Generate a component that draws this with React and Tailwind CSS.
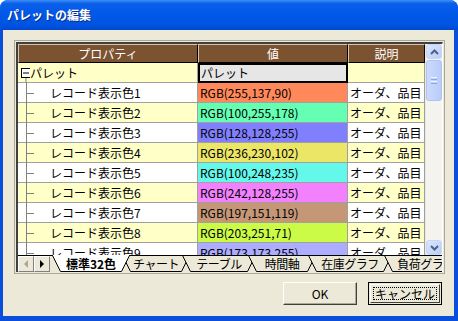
const rows = [
  [255, 137, 90],
  [100, 255, 178],
  [128, 128, 255],
  [236, 230, 102],
  [100, 248, 235],
  [242, 128, 255],
  [197, 151, 119],
  [203, 251, 71],
  [173, 173, 255],
];

const tabs = [
  { label: '標準32色', w: 'w-[78px]', width: 78, active: true },
  { label: 'チャート', w: 'w-[68px]', width: 68 },
  { label: 'テーブル', w: 'w-[74px]', width: 74 },
  { label: '時間軸', w: 'w-[68px]', width: 68 },
  { label: '在庫グラフ', w: 'w-[84px]', width: 84 },
  { label: '負荷グラフ', w: 'w-[84px]', width: 84 },
];

function Tree({ first }) {
  if (first) {
    return (
      <svg width="12" height="20" className="shrink-0">
        <rect x="3.5" y="5.5" width="9" height="9" fill="#fff" stroke="#000" />
        <line x1="5" y1="10" x2="11" y2="10" stroke="#000" />
        <line x1="8" y1="15" x2="8" y2="20" stroke="#808080" />
      </svg>
    );
  }
  return (
    <svg width="32" height="20" className="shrink-0">
      <line x1="8.5" y1="0" x2="8.5" y2="20" stroke="#808080" />
      <line x1="8" y1="10.5" x2="16" y2="10.5" stroke="#808080" />
    </svg>
  );
}

function ScrollBtn({ up }) {
  return (
    <div className="h-[15px] shrink-0 rounded-[3px] border border-[#c6d5f8] bg-[linear-gradient(to_bottom_right,#dbe6fe,#b9cdf8)] flex items-center justify-center">
      <svg width="9" height="6">
        <polyline
          points={up ? '1,5 4.5,1.5 8,5' : '1,1 4.5,4.5 8,1'}
          fill="none"
          stroke="#4d6185"
          strokeWidth="2"
        />
      </svg>
    </div>
  );
}

function Tab({ tab, first }) {
  const w = tab.width;
  return (
    <div
      className={`relative shrink-0 h-[17px] ${tab.w} ${first ? 'ml-[2px]' : '-ml-[8px]'} ${
        tab.active ? 'z-10 font-bold' : 'tracking-[-0.5px]'
      } flex items-center justify-center overflow-hidden`}
    >
      <svg className="absolute left-0 top-0" width={w} height="17">
        <polygon
          points={`0.5,0.5 ${w - 0.5},0.5 ${w - 8.5},16.5 8.5,16.5`}
          fill={tab.active ? '#ffffff' : '#ece9d8'}
          stroke="#000"
        />
        {tab.active && <line x1="1" y1="0.5" x2={w - 1} y2="0.5" stroke="#fff" />}
      </svg>
      <span className="relative">{tab.label}</span>
    </div>
  );
}

export default function App() {
  return (
    <div className="w-[458px] h-[321px] flex flex-col bg-[#0a4fdc] rounded-t-[8px] overflow-hidden font-['Noto_Sans_CJK_JP',sans-serif] text-[12px] text-black leading-none">
      <div className="h-[30px] shrink-0 flex items-center pl-[7px] pb-[1px] bg-[linear-gradient(to_bottom,#3d8ff5_0%,#0a5fea_12%,#0058e8_50%,#0053e0_85%,#0048cf_100%)] text-white font-bold [text-shadow:1px_1px_0_#0a2a88]">
        パレットの編集
      </div>

      <div className="flex-1 ml-[3px] mr-[4px] mb-[5px] bg-[#ece9d8] pl-[11px] pt-[10px] flex flex-col">
        <div className="w-[431px] h-[234px] border border-[#aca899] p-px">
          <div className="h-full border-l-2 border-t-2 border-r border-[#404040] border-r-white flex flex-col">
            <div className="h-[211px] shrink-0 flex">
              <div className="w-[407px] overflow-hidden flex flex-col">
                <div className="h-[19px] shrink-0 flex bg-[#7b5331] text-white">
                  <div className="w-[180px] border-t border-l border-[#d8c4a8] border-r-black border-b-black border-r border-b flex items-center justify-center">
                    プロパティ
                  </div>
                  <div className="w-[150px] border-t border-l border-[#d8c4a8] border-r-black border-b-black border-r border-b flex items-center justify-center">
                    値
                  </div>
                  <div className="w-[77px] border-t border-l border-[#d8c4a8] border-r-black border-b-black border-r border-b flex items-center justify-center">
                    説明
                  </div>
                </div>

                <div className="h-[20px] shrink-0 flex bg-[#ffffc8] border-b border-[#a0a0a0]">
                  <div className="w-[180px] border-r border-[#a0a0a0] flex items-center">
                    <Tree first />
                    <span>パレット</span>
                  </div>
                  <div className="w-[150px] -mb-px h-[20px] border-2 border-black bg-[#e6e6e6] flex items-center pl-[1px]">
                    パレット
                  </div>
                  <div className="w-[77px] border-r border-[#a0a0a0]" />
                </div>

                {rows.map((c, i) => (
                  <div
                    key={i}
                    className={`h-[20px] shrink-0 flex border-b border-[#a0a0a0] ${
                      i % 2 === 0 ? 'bg-white' : 'bg-[#ffffc8]'
                    }`}
                  >
                    <div className="w-[180px] border-r border-[#a0a0a0] flex items-center">
                      <Tree />
                      <span>レコード表示色{i + 1}</span>
                    </div>
                    <div
                      className="w-[150px] border-r border-[#a0a0a0] flex items-center pl-[2px]"
                      style={{ backgroundColor: `rgb(${c[0]},${c[1]},${c[2]})` }}
                    >
                      RGB({c.join(',')})
                    </div>
                    <div className="w-[77px] border-r border-[#a0a0a0] flex items-center pl-[2px] whitespace-nowrap overflow-hidden">
                      オーダ、品目
                    </div>
                  </div>
                ))}
              </div>

              <div className="ml-px w-[16px] h-full flex flex-col bg-[#f4f3ee]">
                <ScrollBtn up />
                <div className="mt-px h-[41px] shrink-0 rounded-[3px] border border-[#aec2f3] bg-[linear-gradient(to_right,#cbdafd,#b9ccf8)] flex flex-col items-center justify-center gap-px">
                  <div className="w-[6px] h-px bg-[#eef4fe]" />
                  <div className="w-[6px] h-px bg-[#8ca6e6]" />
                  <div className="w-[6px] h-px bg-[#eef4fe]" />
                  <div className="w-[6px] h-px bg-[#8ca6e6]" />
                </div>
                <div className="flex-1" />
                <ScrollBtn />
              </div>
            </div>

            <div className="relative h-[17px] shrink-0 flex overflow-hidden bg-[#ece9d8]">
              <div className="absolute left-0 right-0 top-0 h-px bg-black" />
              <div className="mt-px h-[16px] w-[16px] shrink-0 border border-t-white border-l-white border-r-[#808080] border-b-[#808080] flex items-center justify-center">
                <svg width="5" height="8">
                  <polygon points="4,0 4,8 0,4" fill="#aca899" />
                </svg>
              </div>
              <div className="mt-px h-[16px] w-[16px] shrink-0 border border-t-white border-l-white border-r-[#808080] border-b-[#808080] flex items-center justify-center">
                <svg width="5" height="8">
                  <polygon points="0,0 0,8 4,4" fill="#000" />
                </svg>
              </div>
              {tabs.map((t, i) => (
                <Tab key={t.label} tab={t} first={i === 0} />
              ))}
            </div>
          </div>
        </div>

        <div className="flex mt-[8px] pl-[269px] gap-[11px]">
          <div className="w-[74px] h-[23px] border border-t-white border-l-white border-r-[#404040] border-b-[#404040] shadow-[inset_-1px_-1px_0_#aca899] flex items-center justify-center">
            OK
          </div>
          <div className="w-[74px] h-[23px] border border-black p-px">
            <div className="h-full border border-t-white border-l-white border-r-[#404040] border-b-[#404040] p-[2px]">
              <div className="h-full border border-dotted border-black flex items-center justify-center">
                キャンセル
              </div>
            </div>
          </div>
        </div>
      </div>
    </div>
  );
}
